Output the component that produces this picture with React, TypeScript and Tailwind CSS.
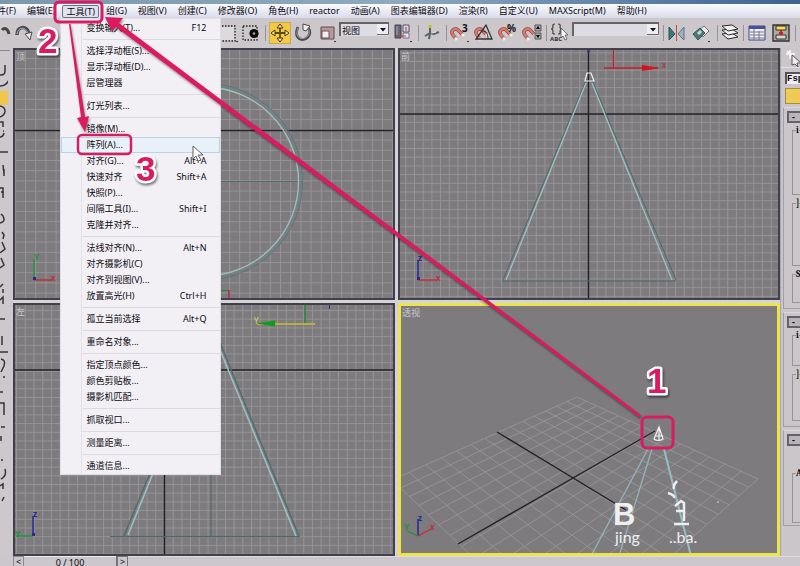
import React from "react";

type Entry = { label: string; keys?: string; active?: boolean };

const toolGroups: Entry[][] = [
  [{ label: "变换输入(T)...", keys: "F12" }],
  [{ label: "选择浮动框(S)..." }, { label: "显示浮动框(D)..." }, { label: "层管理器" }],
  [{ label: "灯光列表..." }],
  [
    { label: "镜像(M)..." },
    { label: "阵列(A)...", active: true },
    { label: "对齐(G)...", keys: "Alt+A" },
    { label: "快速对齐", keys: "Shift+A" },
    { label: "快照(P)..." },
    { label: "间隔工具(I)...", keys: "Shift+I" },
    { label: "克隆并对齐..." },
  ],
  [
    { label: "法线对齐(N)...", keys: "Alt+N" },
    { label: "对齐摄影机(C)" },
    { label: "对齐到视图(V)..." },
    { label: "放置高光(H)", keys: "Ctrl+H" },
  ],
  [{ label: "孤立当前选择", keys: "Alt+Q" }],
  [{ label: "重命名对象..." }],
  [{ label: "指定顶点颜色..." }, { label: "颜色剪贴板..." }, { label: "摄影机匹配..." }],
  [{ label: "抓取视口..." }],
  [{ label: "测量距离..." }],
  [{ label: "通道信息..." }],
];

const menusBefore = ["文件(F)", "编辑(E)"];
const menusAfter = [
  "组(G)", "视图(V)", "创建(C)", "修改器(O)", "角色(H)", "reactor", "动画(A)",
  "图表编辑器(D)", "渲染(R)", "自定义(U)", "MAXScript(M)", "帮助(H)",
];

function ToolsMenu() {
  return (
    <div
      role="menu"
      className="absolute -left-0.5 top-full z-20 w-[161px] border border-[#dedce4] bg-[#f2f0f5] pt-px font-normal"
    >
      <div className="absolute inset-y-0 left-5 w-px bg-[#e4e2e8]" />
      {toolGroups.map((group, i) => (
        <div key={i} className="relative">
          {i > 0 && (
            <div className="flex h-[7px] items-center pl-[22px]">
              <div className="h-px w-full bg-[#dddbe1]" />
            </div>
          )}
          {group.map((e) => (
            <button
              key={e.label}
              role="menuitem"
              className={
                "flex h-4 w-full items-center justify-between border pr-[13px] pl-6 text-left " +
                (e.active ? "border-[#bcd3e6] bg-[#e9f1f8]" : "border-transparent")
              }
            >
              <span>{e.label}</span>
              <span>{e.keys}</span>
            </button>
          ))}
        </div>
      ))}
    </div>
  );
}

function MenuBar() {
  return (
    <nav className="flex h-[14px] items-center gap-[11px] bg-linear-to-b from-[#fafbff] to-[#d9dbea] whitespace-nowrap">
      <div className="-ml-3 flex gap-[11px]">
        {menusBefore.map((m) => (
          <button key={m}>{m}</button>
        ))}
      </div>
      <div className="relative -mx-1">
        <button className="block h-[13px] rounded-xs border border-[#6d7484] bg-[#dfe1ee] px-[3px] leading-[11px]">
          工具(T)
        </button>
        <ToolsMenu />
      </div>
      {menusAfter.map((m) => (
        <button key={m}>{m}</button>
      ))}
    </nav>
  );
}

function Tool({ name, w, on, children }: { name: string; w: string; on?: boolean; children: React.ReactNode }) {
  return (
    <button
      aria-label={name}
      className={"flex h-[22px] shrink-0 items-center justify-center " + w + (on ? " border border-[#c9a850] bg-[#f3c842]" : "")}
    >
      <svg width="20" height="20" viewBox="0 0 20 20" fill="none" className="shrink-0">
        {children}
      </svg>
    </button>
  );
}

function Divider({ w }: { w: string }) {
  return (
    <div className={"flex h-4 shrink-0 justify-center " + w}>
      <div className="w-px bg-[#9a8f9c]" />
    </div>
  );
}

function Picker({ name, value, w }: { name: string; value: string; w: string }) {
  return (
    <div className={"relative mb-2 shrink-0 " + w}>
      <select
        aria-label={name}
        defaultValue={value}
        className="block h-[14px] w-full appearance-none border-t-2 border-l-2 border-t-[#66636b] border-l-[#66636b] bg-[#dddce3] pl-px leading-[11px]"
      >
        <option>{value}</option>
      </select>
      <svg width="12" height="11" viewBox="0 0 12 11" className="pointer-events-none absolute top-[2px] right-0">
        <path d="M0 0h12v11h-12z" fill="#eeedf1" />
        <path d="M11.5 0v10.5H0" stroke="#6b6870" fill="none" />
        <path d="M3 4h6l-3 3.500z" fill="#111" />
      </svg>
    </div>
  );
}

function Magnet() {
  return (
    <>
      <path d="M6 16l-3-4c-3-4 2-8 5-5l5 5" stroke="#8d4a44" strokeWidth="3.600" />
      <path d="M6 16l-3-4c-3-4 2-8 5-5l5 5" stroke="#d8796c" strokeWidth="2.200" />
      <path d="M5 15l2 2M12 11l2 2" stroke="#f2eeee" strokeWidth="3" />
    </>
  );
}

function Toolbar() {
  return (
    <div className="flex h-[30px] items-center overflow-hidden bg-[#cbc7cb]">
      <Tool name="撤销" w="w-3">
        <path d="M6 7c3-3 6-1 7 4" stroke="#47434a" strokeWidth="3" />
      </Tool>
      <Tool name="重做" w="w-6">
        <path d="M3 12c0-9 9-10 12-2" stroke="#4d4a51" strokeWidth="3.500" />
        <path d="M3 11c1-7 8-8 11-1" stroke="#aeb0b5" />
        <path d="M11 11l7-2-2 8z" fill="#e6e6e9" stroke="#4d4a51" />
      </Tool>
      <div className="w-[184px] shrink-0" />
      <Tool name="矩形选择区域" w="w-5">
        <path d="M-1 3h16v15h-16z" stroke="#222" strokeWidth="1.300" strokeDasharray="1.500 1.500" />
        <path d="M0 4h14v13h-14z" fill="#dcdadf" />
        <circle cx="17" cy="18.500" r=".8" fill="#111" />
      </Tool>
      <Tool name="窗口/交叉" w="w-[22px]">
        <path d="M2 3h14v14h-14z" stroke="#222" strokeWidth="1.300" strokeDasharray="1.500 1.500" />
        <circle cx="13" cy="10.500" r="4.600" fill="#0b0b0b" />
        <circle cx="13" cy="10.500" r="1.200" fill="#aaa" />
      </Tool>
      <Divider w="w-[7px]" />
      <Tool name="选择并移动" w="w-[22px]" on>
        <path d="M10 3v14M3 10h14" stroke="#5d4a15" strokeWidth="1.800" />
        <path d="M10 1l3 4H7zM10 19l3-4H7zM1 10l4-3v6zM19 10l-4-3v6z" fill="#f8e7a0" stroke="#44350e" />
      </Tool>
      <Tool name="选择并旋转" w="w-[26px]">
        <path d="M4 4c-4 9 1 14 7 12 6-3 6-9 2-12" stroke="#4b484f" strokeWidth="2.800" />
        <path d="M4 5c-3 8 1 12 7 10 5-2 5-7 3-10" stroke="#b6b4ba" strokeWidth=".8" />
        <path d="M9 7V1l7 2-4 5z" fill="#eee" stroke="#4b484f" />
      </Tool>
      <Tool name="选择并缩放" w="w-[22px]">
        <path d="M3 4h13v12h-13z" fill="#b79798" stroke="#5b4e54" />
        <path d="M4 8h7v7h-7z" fill="#f5eeee" stroke="#6c4f53" />
        <circle cx="17" cy="18.500" r=".8" fill="#111" />
      </Tool>
      <Picker name="参考坐标系" value="视图" w="w-[50px]" />
      <Tool name="使用轴点中心" w="w-[27px]">
        <path d="M2 2h6v13h-6z" fill="#686478" stroke="#444153" />
        <path d="M3 3h2v9h-2z" fill="#8a879b" />
        <path d="M10 2h6v7h-6z" fill="#d5d4e3" stroke="#555364" />
        <path d="M10 10h6v5h-6z" fill="#e4e1ea" stroke="#777388" />
        <path d="M4 13h9M13 4v4" stroke="#c13b3b" />
        <circle cx="18" cy="18.500" r=".8" fill="#111" />
      </Tool>
      <Divider w="w-1" />
      <Tool name="选择并操纵" w="w-6">
        <path d="M3 13l5-3 4 1 5-2M8 10l-1 6M8 10V5" stroke="#56636a" strokeWidth="2" />
        <path d="M8 2v3" stroke="#b6c427" strokeWidth="3" />
        <path d="M9 10l5-1" stroke="#dfe5ee" />
      </Tool>
      <Divider w="w-1" />
      <Tool name="捕捉开关" w="w-6">
        <Magnet />
        <text x="12" y="9" fontSize="10" fontWeight="700" fill="#111">3</text>
        <circle cx="18" cy="18.500" r=".8" fill="#111" />
      </Tool>
      <Tool name="角度捕捉切换" w="w-6">
        <Magnet />
        <path d="M2 16h16L12 2z" stroke="#333" strokeWidth="1.300" />
        <path d="M8 8c5 0 6 4 6 8" stroke="#333" />
      </Tool>
      <Tool name="百分比捕捉切换" w="w-6">
        <Magnet />
        <text x="9" y="9" fontSize="10" fontWeight="700" fill="#111">%</text>
      </Tool>
      <Tool name="微调器捕捉切换" w="w-6">
        <Magnet />
        <path d="M13 2h6v6h-6zM13 10h6v6h-6z" fill="#aaa8ad" stroke="#555" />
        <path d="M14 6h4l-2-3zM14 12h4l-2 3z" fill="#000" />
      </Tool>
      <Divider w="w-1" />
      <Tool name="编辑命名选择集" w="w-6">
        <path d="M5 1q-3 0-2 3 0 2-2 2 2 0 2 3-1 2 2 2M8 1q3 0 2 3 0 2 2 2-2 0-2 3 1 2-2 2" stroke="#444" strokeWidth="1.200" />
        <text x="0" y="18" fontSize="6" fontWeight="700" fill="#333">ABC</text>
        <path d="M11 5l7 7h-3l2 4-2 1-2-4-2 2z" fill="#f5f5f7" stroke="#555" strokeWidth=".8" />
      </Tool>
      <Picker name="命名选择集" value="" w="w-[87px]" />
      <Divider w="w-[8px]" />
      <Tool name="镜像" w="w-5">
        <path d="M2 4v13l6-6z" fill="#39797a" stroke="#2a5253" />
        <path d="M17 4v13l-6-6z" fill="#9cb4be" stroke="#5a7580" />
        <path d="M9.500 2v16" stroke="#c44" />
      </Tool>
      <Tool name="对齐" w="w-[28px]">
        <path d="M8 7l5-4 5 5-6 6z" fill="#e9eaf0" stroke="#777481" />
        <path d="M2 11l7-6 5 5-7 7z" fill="#4b7779" stroke="#3d5557" />
        <path d="M6 10l3-3 2 2-3 3z" fill="#c9dadd" />
        <circle cx="18" cy="18.500" r=".8" fill="#111" />
      </Tool>
      <Divider w="w-1" />
      <Tool name="层管理器" w="w-[22px]">
        {[12, 8, 4].map((y) => (
          <path key={y} d={`M2 ${y - 1}l10-1 6 4-10 2z`} fill="#f1f0f3" stroke="#29292d" />
        ))}
      </Tool>
      <Divider w="w-1" />
      <Tool name="曲线编辑器" w="w-6">
        <path d="M2 3h16v14h-16z" fill="#f0f1f7" stroke="#40438a" />
        <path d="M2 3h16v3h-16z" fill="#4b5197" />
        <path d="M3 9h15M3 12h15M3 15h15M7 6v11M12 8v9" stroke="#74778f" />
      </Tool>
      <Tool name="图解视图" w="w-6">
        <path d="M2 2h16v16h-16z" fill="#aaa9a5" stroke="#333" strokeWidth="1.400" />
        <path d="M5 3h10v4h-10z" fill="#f5df52" stroke="#333" />
        <path d="M5 12h10v4h-10z" fill="#d8d6ce" stroke="#333" />
        <path d="M10 7v5M8 10h4" stroke="#c22" strokeWidth="2" />
      </Tool>
      <Divider w="w-1" />
    </div>
  );
}

const scraps = [
  { name: "选择工具", h: "h-10", d: "M5 14v6q0 4-4 4H0M0 35q6 0 9-6", on: false },
  { name: "当前工具", h: "h-[14px]", d: "", on: true },
  { name: "圆形", h: "h-[50px]", d: "M0 1q5 1 5 5t-5 6M0 17h3v5M3 26h1M0 32q3 0 4-4M0 47h8", on: false },
  { name: "骨骼", h: "h-[44px]", d: "M3 10l1 9M4 14v7M0 33h3v10M1 37h3", on: false },
  { name: "路径", h: "h-[54px]", d: "M0 24q6-1 3-7l-2-2M2 33l2 3-1 4M0 54l5-4-3-7", on: false },
  { name: "约束", h: "h-[70px]", d: "M0 15l4-3-3-7M0 34l3-3M3 36v4M0 47l3-3v7M0 66h5", on: false },
  { name: "动力", h: "h-[60px]", d: "M2 13v9M0 29h8M1 36q5 1 3 7l-3 6M4 53v2", on: false },
  { name: "水面", h: "h-[60px]", d: "M0 9h3M0 20h4v12M1 44h4M1 53v5", on: false },
  { name: "布料", h: "h-[60px]", d: "M2 16v2M5 26q2 7-4 10M0 43l3-2v5M4 54l-2 4", on: false },
];

function SideTools() {
  return (
    <aside className="w-[13px] shrink-0 overflow-hidden bg-[#ccc8cb] pt-[2px]">
      <div className="h-px w-[10px] bg-[#8b888d]" />
      {scraps.map((s) => (
        <button
          key={s.name}
          aria-label={s.name}
          className={"block w-2 overflow-hidden " + s.h + (s.on ? " bg-[#f1c64c]" : "")}
        >
          <svg width="10" height="72" viewBox="0 0 10 72" fill="none" stroke="#37343a" strokeWidth="1.500">
            <path d={s.d} />
          </svg>
        </button>
      ))}
    </aside>
  );
}

type Pt = [number, number];

// Projects the unit square onto the ground plane seen in the perspective view.
function ground(u: number, v: number): Pt {
  const [a, b, c, d]: Pt[] = [[577, 397], [758, 479], [568, 648], [392, 480]];
  const dx1 = b[0] - c[0], dx2 = d[0] - c[0], sx = a[0] - b[0] + c[0] - d[0];
  const dy1 = b[1] - c[1], dy2 = d[1] - c[1], sy = a[1] - b[1] + c[1] - d[1];
  const det = dx1 * dy2 - dx2 * dy1;
  const g = (sx * dy2 - dx2 * sy) / det;
  const h = (dx1 * sy - sx * dy1) / det;
  const w = g * u + h * v + 1;
  return [
    ((b[0] - a[0] + g * b[0]) * u + (d[0] - a[0] + h * d[0]) * v + a[0]) / w,
    ((b[1] - a[1] + g * b[1]) * u + (d[1] - a[1] + h * d[1]) * v + a[1]) / w,
  ];
}

const groundLines = Array.from({ length: 15 }, (_, i) => i / 14).flatMap((t) => [
  [ground(t, 0), ground(t, 1)],
  [ground(0, t), ground(1, t)],
]);

function View({ title, box, step, offset, active, children }: {
  title: string; box: string; step?: number; offset?: Pt; active?: boolean; children: React.ReactNode;
}) {
  const id = "grid-" + title;
  return (
    <section
      aria-label={title}
      className={"relative min-h-0 min-w-0 overflow-hidden bg-[#7e7b7e] " + (active ? "border-3 border-[#ebe44b]" : "border-2 border-[#42414b]")}
    >
      <svg viewBox={box} preserveAspectRatio="xMidYMid slice" fill="none" className="absolute inset-0 h-full w-full">
        {step && offset && (
          <>
            <defs>
              <pattern id={id} x={offset[0]} y={offset[1]} width={step} height={step} patternUnits="userSpaceOnUse">
                <path d={`M0 .5H${step}M.5 0V${step}`} stroke="#969396" strokeWidth="1" />
              </pattern>
            </defs>
            <rect width="800" height="566" fill={`url(#${id})`} />
          </>
        )}
        {children}
      </svg>
      <h2 className="relative pt-px pl-px text-[#c8c5c9]">{title}</h2>
    </section>
  );
}

function Axis({ x, y, up, side, upColor, sideColor, upName, sideName, dir = 1 }: {
  x: number; y: number; up: number; side: number; upColor: string; sideColor: string; upName: string; sideName: string; dir?: number;
}) {
  return (
    <g fontSize="8" fontWeight="700">
      <path d={`M${x} ${y}V${y - up}`} stroke={upColor} strokeWidth="1.500" />
      <path d={`M${x} ${y}h${side * dir}`} stroke={sideColor} strokeWidth="1.500" />
      <path d={`M${x - 1} ${y - 3}h3v3h-3z`} fill="#2b2a86" />
      <text x={x} y={y - up + 1} fill={upColor}>{upName}</text>
      <text x={x + side * dir - 1} y={y + 1} fill={sideColor}>{sideName}</text>
    </g>
  );
}

function Viewports() {
  return (
    <main className="grid min-w-0 flex-1 grid-cols-2 grid-rows-[252fr_253fr] gap-[3px] bg-[#d5d2d9]">
      <View title="顶" box="15 50 378 248" step={10.2} offset={[229, 58]}>
        <path d="M13 130.500H395" stroke="#25232a" strokeWidth="1.300" />
        <path d="M100 181.500H302" stroke="#54706f" />
        <circle cx="204" cy="181.500" r="98.500" stroke="#5d7475" />
        <circle cx="204" cy="181.500" r="96.500" stroke="#718284" strokeWidth="2" />
        <circle cx="204" cy="181.500" r="94.500" stroke="#a5bdbe" strokeWidth="1.300" />
        <path d="M220 290.500h9" stroke="#1e8a2e" />
        <path d="M229 290v10" stroke="#b3293a" strokeWidth="1.500" />
        <Axis x={34} y={280} up={21} side={18} upColor="#1f9440" sideColor="#c02f38" upName="Y" sideName="x" />
      </View>
      <View title="前" box="400 50 378 248" step={8.7} offset={[588, 61]}>
        <path d="M398 114H780M588.500 48V300" stroke="#201e24" strokeWidth="1.400" />
        <path d="M502 281H676M587 78L503 280M591 78L676 280" stroke="#4d6a6b" />
        <path d="M586 83L506 280M592 83L672 280" stroke="#9dc0c4" strokeWidth="1.300" />
        <path d="M587 73h4l3 8h-9z" stroke="#f2f2f2" strokeWidth="1.200" />
        <path d="M588.500 48v5" stroke="#29298f" strokeWidth="2" />
        <path d="M613.500 48v20M604 68h54" stroke="#c32025" strokeWidth="1.300" />
        <path d="M642 65v6l18-3z" fill="#d0141b" />
        <text x="662" y="68" fontSize="8" fill="#c32025">x</text>
        <Axis x={418} y={280} up={20} side={19} upColor="#27279a" sideColor="#c02f38" upName="z" sideName="x" />
      </View>
      <View title="左" box="15 305 378 249" step={8.7} offset={[164, 310]}>
        <path d="M13 370H395M164.500 303V556" stroke="#201e24" strokeWidth="1.400" />
        <path d="M110 536.500H300M211 350V536" stroke="#4a6a6a" />
        <path d="M205 340L124 536M219 340L299 536" stroke="#506d70" strokeWidth="1.500" />
        <path d="M207 340L128 535M216 340L296 536" stroke="#9dc0c4" strokeWidth="1.500" />
        <path d="M305 304v20" stroke="#158a27" strokeWidth="1.300" />
        <path d="M257 324h58" stroke="#c9bd30" strokeWidth="1.300" />
        <path d="M256 323.500l19-3v6z" fill="#0f9c1b" />
        <text x="254" y="324" fontSize="8" fill="#e0d638">Y</text>
        <path d="M329.500 305v4" stroke="#29298f" />
        <Axis x={33} y={536} up={20} side={17} dir={-1} upColor="#27279a" sideColor="#1f9440" upName="z" sideName="Y" />
      </View>
      <View title="透视" box="401 306 376 247" active>
        {groundLines.map(([p, q], i) => (
          <path key={i} d={`M${p[0]} ${p[1]}L${q[0]} ${q[1]}`} stroke="#9b989b" strokeWidth=".8" />
        ))}
        <path d="M497 432L626 510M458 544L655 431" stroke="#252329" strokeWidth="1.400" />
        <path d="M648 449L591 556M652 449L619 556" stroke="#91b5b9" strokeWidth="1.300" />
        <path d="M664 449L691 556" stroke="#92c0c8" strokeWidth="2" />
        <path d="M659 427l-5 12q4 3 9 0zM659 428v13M655 436h8" stroke="#f3f3f3" strokeWidth="1.200" />
        <g fill="#efeff0">
          <text x="613" y="525" fontSize="31" fontWeight="700" fontFamily="Liberation Sans, sans-serif">B</text>
          <text x="615" y="543" fontSize="16" fontFamily="Lato, sans-serif">jing</text>
          <text x="669" y="543" fontSize="16" fontFamily="Lato, sans-serif">..ba.</text>
        </g>
        <path d="M668 493q7 2 6 5M677 481q-4 4-3 8M675 506l6-5 3 2v18M676 511h7M674 524h15" stroke="#eeeef0" strokeWidth="2.500" />
        <path d="M717 502h2" stroke="#ddd" />
        <g fontSize="8" fontWeight="700">
          <path d="M418 536v-17" stroke="#27279a" strokeWidth="1.500" />
          <path d="M418 536l13-7" stroke="#c02f38" strokeWidth="1.300" />
          <path d="M418 536l-11-5" stroke="#1f8f32" strokeWidth="1.300" />
          <text x="418" y="521" fill="#27279a">z</text>
          <text x="430" y="530" fill="#c02f38">x</text>
          <text x="404" y="530" fill="#1f8f32">Y</text>
        </g>
      </View>
    </main>
  );
}

function Group({ legend, h }: { legend: string; h: string }) {
  return (
    <fieldset className={"ml-2 w-20 border border-[#98939a] " + h}>
      <legend className="ml-[3px] h-[6px] font-serif leading-[6px] font-bold">{legend}</legend>
    </fieldset>
  );
}

function Rollout({ h, children }: { h: string; children: React.ReactNode }) {
  return (
    <div className={"ml-[2px] w-24 border border-[#a29da4] border-t-[#dcd9de] " + h}>
      <button className="mt-[3px] ml-[3px] block h-3 w-20 border-2 border-[#65616a] bg-[#b8b4ba] pl-[3px] text-left leading-[6px] font-bold">
        -
      </button>
      {children}
    </div>
  );
}

function CommandPanel() {
  return (
    <aside className="w-5 shrink-0 overflow-hidden border-l border-[#aaa5ab] bg-[#cbc6ca]">
      <button aria-label="创建" className="flex h-5 w-10 items-center border-b border-[#e2dfe3] pl-[5px]">
        <svg width="20" height="18" viewBox="0 0 20 18">
          <path d="M4 1v9M0 5h9M1 2l7 7" stroke="#fbfbfb" strokeWidth="1.500" />
          <path d="M6 6l9 8h-4l1 4-3-3-3 1z" fill="#eee" stroke="#5b5860" />
        </svg>
      </button>
      <input
        aria-label="对象名称"
        defaultValue="Fsphere01"
        className="mt-1 ml-1 block h-3 w-20 border-t-2 border-l-2 border-[#55515a] bg-[#efedf1] font-['Liberation_Mono',monospace] text-[9px] font-bold"
      />
      <button aria-label="对象颜色" className="mt-1 ml-1 block h-4 w-20 border border-[#a39048] bg-[#f1ca55]" />
      <div className="h-[3px]" />
      <Rollout h="h-[202px]">
        <div className="mt-1 space-y-[5px]">
          <Group legend="i" h="h-[68px]" />
          <Group legend="]" h="h-[66px]" />
          <Group legend="S" h="h-[32px]" />
        </div>
      </Rollout>
      <div className="h-[3px]" />
      <Rollout h="h-[115px]">
        <div className="mt-1 space-y-[5px]">
          <Group legend="i" h="h-[34px]" />
          <Group legend="]" h="h-[50px]" />
        </div>
      </Rollout>
      <div className="h-[3px]" />
      <Rollout h="h-[96px]">
        <div className="mt-6">
          <Group legend="A" h="h-[53px]" />
        </div>
      </Rollout>
    </aside>
  );
}

function TimeBar() {
  return (
    <footer className="flex h-[10px] shrink-0 overflow-hidden bg-[#cbc7cc] pl-[13px] leading-3">
      <button aria-label="上一帧" className="h-3 w-[11px] border border-[#8d8991] leading-[10px]">&lt;</button>
      <output className="h-3 w-[92px] border-t border-[#eceaee] text-center">0 / 100</output>
      <button aria-label="下一帧" className="h-3 w-3 border border-l-2 border-[#77737c] leading-[10px]">&gt;</button>
      <div className="h-3 flex-1 border-t border-[#dfdce1]" />
    </footer>
  );
}

function Notes() {
  return (
    <svg viewBox="0 0 800 566" fill="none" className="pointer-events-none absolute inset-0 z-30 h-full w-full">
      <path d="M193 146v13l3-3 2 5 3-1-3-5h5z" fill="#fff" stroke="#5b5f66" />
      <g className="drop-shadow-[1px_2px_1px_rgba(0,0,0,0.4)]">
        <path d="M105 17l18 1-4 5L641 415l-2 2L116 27l-4 4z" fill="#dc1a60" />
        <path d="M69 24l1.500 0L85 117l4-1-4 16-8-14 4-1z" fill="#dc1a60" />
      </g>
      <g stroke="#d71c61" strokeWidth="3">
        <rect x="55" y="2" width="47" height="20" rx="4" />
        <rect x="78" y="135" width="53" height="19" rx="4" strokeWidth="2.500" />
        <rect x="642" y="417" width="31" height="31" rx="5" />
      </g>
      <g
        fontFamily="Liberation Sans, sans-serif"
        fontSize="35"
        fontWeight="700"
        fill="#dc1a60"
        stroke="#fff"
        strokeWidth="5"
        strokeLinejoin="round"
        paintOrder="stroke"
        className="drop-shadow-[1px_2px_1px_rgba(0,0,0,0.5)]"
      >
        <text x="38" y="53">2</text>
        <text x="136" y="181">3</text>
        <text x="647" y="393">1</text>
      </g>
    </svg>
  );
}

export default function App() {
  return (
    <div className="relative flex min-h-screen flex-col overflow-hidden bg-[#cbc7cb] font-['Noto_Sans','Noto_Sans_CJK_SC',sans-serif] text-[9px] leading-3 text-[#0c0a10]">
      <div className="h-1 bg-linear-to-r from-[#7c98ac] via-[#8fa9bf] to-[#3c6491]" />
      <MenuBar />
      <Toolbar />
      <div className="flex flex-1">
        <SideTools />
        <Viewports />
        <CommandPanel />
      </div>
      <TimeBar />
      <Notes />
    </div>
  );
}
